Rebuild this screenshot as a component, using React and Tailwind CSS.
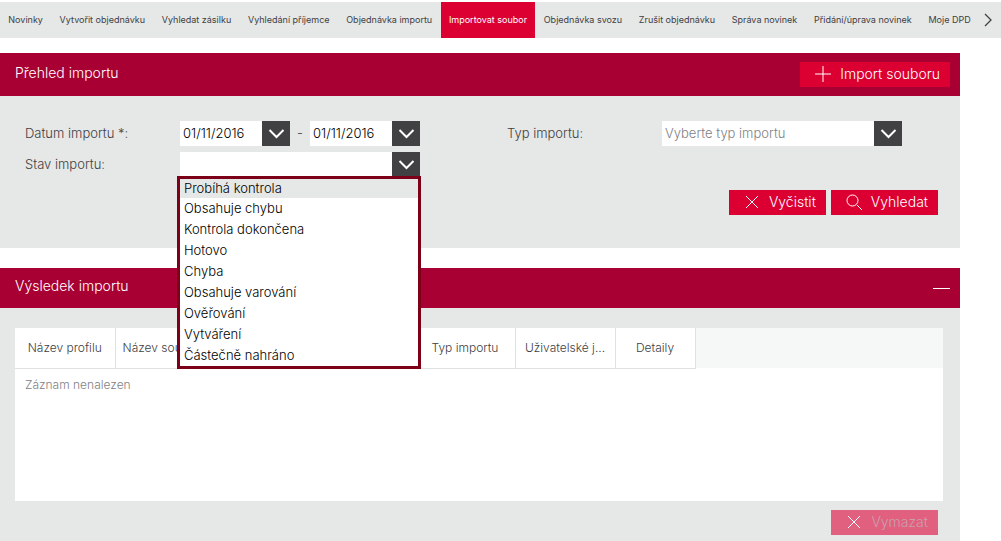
import { useState } from 'react'
import clsx from 'clsx'

const NAV = [
  'Novinky',
  'Vytvořit objednávku',
  'Vyhledat zásilku',
  'Vyhledání příjemce',
  'Objednávka importu',
  'Importovat soubor',
  'Objednávka svozu',
  'Zrušit objednávku',
  'Správa novinek',
  'Přidání/úprava novinek',
  'Moje DPD',
]

const STATES = [
  'Probíhá kontrola',
  'Obsahuje chybu',
  'Kontrola dokončena',
  'Hotovo',
  'Chyba',
  'Obsahuje varování',
  'Ověřování',
  'Vytváření',
  'Částečně nahráno',
]

const COLUMNS = [
  { id: 'profile', label: 'Název profilu', width: 'w-[100px]' },
  { id: 'file', label: 'Název souboru', width: 'w-[100px]' },
  { id: 'date', label: '', width: 'w-[100px]' },
  { id: 'state', label: '', width: 'w-[100px]' },
  { id: 'type', label: 'Typ importu', width: 'w-[100px]' },
  { id: 'user', label: 'Uživatelské j...', width: 'w-[100px]' },
  { id: 'detail', label: 'Detaily', width: 'w-20' },
]

const ICONS = {
  plus: 'M9 1v16M1 9h16',
  cross: 'M3 3l12 12M15 3L3 15',
  search: 'M12 12l5 5',
}

function Icon({ name }) {
  return (
    <svg viewBox="0 0 18 18" className="size-[18px] shrink-0" fill="none" stroke="currentColor" aria-hidden="true">
      {name === 'search' && <circle cx="7.5" cy="7.5" r="5.5" />}
      <path d={ICONS[name]} />
    </svg>
  )
}

function Chevron() {
  return (
    <svg viewBox="0 0 28 25" className="h-[25px] w-7" fill="none" stroke="#fff" strokeWidth="2" aria-hidden="true">
      <path d="M7.5 9l7 7 7-7" />
    </svg>
  )
}

function ActionButton({ icon, children, className = 'bg-[#dc0032] text-white', ...rest }) {
  return (
    <button
      type="button"
      className={clsx('flex h-[25px] items-center gap-2 pr-2.5 pb-0.5 pl-3.5 text-sm', className)}
      {...rest}
    >
      <Icon name={icon} />
      {children}
    </button>
  )
}

function DateField({ label, defaultValue }) {
  return (
    <div className="flex h-[25px] w-[110px] bg-white">
      <input
        type="text"
        aria-label={label}
        defaultValue={defaultValue}
        className="min-w-0 flex-1 px-[3px] text-[13px] text-black outline-none"
      />
      <button type="button" aria-label="Otevřít kalendář" className="bg-[#414042]">
        <Chevron />
      </button>
    </div>
  )
}

function StateSelect() {
  const [open, setOpen] = useState(true)
  const [value, setValue] = useState('')

  const pick = (s) => {
    setValue(s)
    setOpen(false)
  }

  return (
    <div className="relative flex h-[25px] bg-white">
      <input
        id="stav"
        role="combobox"
        aria-expanded={open}
        aria-controls="stav-list"
        readOnly
        value={value}
        className="min-w-0 flex-1 px-[3px] text-[13px] text-black outline-none"
      />
      <button type="button" aria-label="Zobrazit stavy" onClick={() => setOpen(!open)} className="bg-[#414042]">
        <Chevron />
      </button>
      {open && (
        <ul
          id="stav-list"
          role="listbox"
          className="absolute top-6 -right-px -left-[3px] z-10 border-3 border-[#7d0019] bg-white text-[13px] text-black"
        >
          {STATES.map((s, i) => (
            <li
              key={s}
              role="option"
              aria-selected={i === 0}
              onClick={() => pick(s)}
              className={clsx('cursor-pointer px-1', i === 0 ? 'bg-[#e6e7e7] leading-[19px]' : 'leading-[21px]')}
            >
              {s}
            </li>
          ))}
        </ul>
      )}
    </div>
  )
}

export default function App() {
  return (
    <div className="pt-0.5 font-['Inter',sans-serif] font-light text-[#414042]">
      <nav className="flex h-9 items-stretch bg-[#e6e7e7] text-[9px] font-normal">
        {NAV.map((item) => (
          <a
            key={item}
            href="#"
            className={clsx(
              'flex flex-auto items-center justify-center px-[7px] whitespace-nowrap',
              item === 'Importovat soubor' && 'bg-[#dc0032] text-white',
            )}
          >
            {item}
          </a>
        ))}
        <button type="button" aria-label="Další" className="pr-2 pl-1">
          <svg viewBox="0 0 10 14" className="h-3.5 w-2.5" fill="none" stroke="currentColor" strokeWidth="1.3" aria-hidden="true">
            <path d="M2 1l6 6-6 6" />
          </svg>
        </button>
      </nav>

      <main className="mt-[15px] mr-[41px] flex flex-col gap-5">
        <section className="bg-[#e6e7e7]">
          <header className="flex h-[43px] items-center justify-between bg-[#a90034] pr-2.5 pl-[15px] text-white">
            <h2 className="pb-1 text-sm">Přehled importu</h2>
            <ActionButton icon="plus">Import souboru</ActionButton>
          </header>

          <form className="pt-[25px] pb-[33px] text-[13px]">
            <div className="flex flex-wrap gap-x-[87px] pl-[25px]">
              <div className="grid grid-cols-[155px_240px] items-center gap-y-1.5">
                <span>Datum importu *:</span>
                <div className="flex items-center justify-between">
                  <DateField label="Datum od" defaultValue="01/11/2016" />
                  <span>-</span>
                  <DateField label="Datum do" defaultValue="01/11/2016" />
                </div>
                <label htmlFor="stav">Stav importu:</label>
                <StateSelect />
              </div>
              <div className="grid grid-cols-[155px_240px] content-start items-center">
                <label htmlFor="typ">Typ importu:</label>
                <div className="grid h-[25px] bg-white">
                  <select
                    id="typ"
                    defaultValue=""
                    className="col-start-1 row-start-1 appearance-none pr-7 pl-[3px] text-[13px] text-[#808285] outline-none"
                  >
                    <option value="">Vyberte typ importu</option>
                  </select>
                  <span className="pointer-events-none col-start-1 row-start-1 justify-self-end bg-[#414042]">
                    <Chevron />
                  </span>
                </div>
              </div>
            </div>
            <div className="mt-[13px] flex justify-end gap-[5px] pr-[22px]">
              <ActionButton icon="cross">Vyčistit</ActionButton>
              <ActionButton icon="search">Vyhledat</ActionButton>
            </div>
          </form>
        </section>

        <section className="bg-[#e6e7e7] pb-1.5">
          <header className="flex h-10 items-center justify-between bg-[#a90034] pr-2.5 pl-[15px] text-white">
            <h2 className="pb-1 text-sm">Výsledek importu</h2>
            <button type="button" aria-label="Sbalit" className="py-2">
              <span className="block h-px w-[17px] bg-white" />
            </button>
          </header>

          <div className="mt-5 mr-[17px] ml-[15px] bg-white">
            <table className="w-full table-fixed text-xs">
              <thead>
                <tr className="h-10 bg-[#f6f8f7]">
                  {COLUMNS.map((c) => (
                    <th
                      key={c.id}
                      className={clsx('border-r border-b border-[#e0e1e1] bg-white p-0 font-light', c.width)}
                    >
                      {c.label}
                    </th>
                  ))}
                  <td />
                </tr>
              </thead>
              <tbody>
                <tr className="h-[133px]">
                  <td colSpan={8} className="px-2.5 pt-2 align-top text-[#808285]">
                    Záznam nenalezen
                  </td>
                </tr>
              </tbody>
            </table>
          </div>
          <div className="mt-[9px] flex justify-end pr-[22px]">
            <ActionButton icon="cross" disabled className="bg-[#e15f7f] text-white">
              <span className="text-[#c9a0aa]">Vymazat</span>
            </ActionButton>
          </div>
        </section>
      </main>
    </div>
  )
}
